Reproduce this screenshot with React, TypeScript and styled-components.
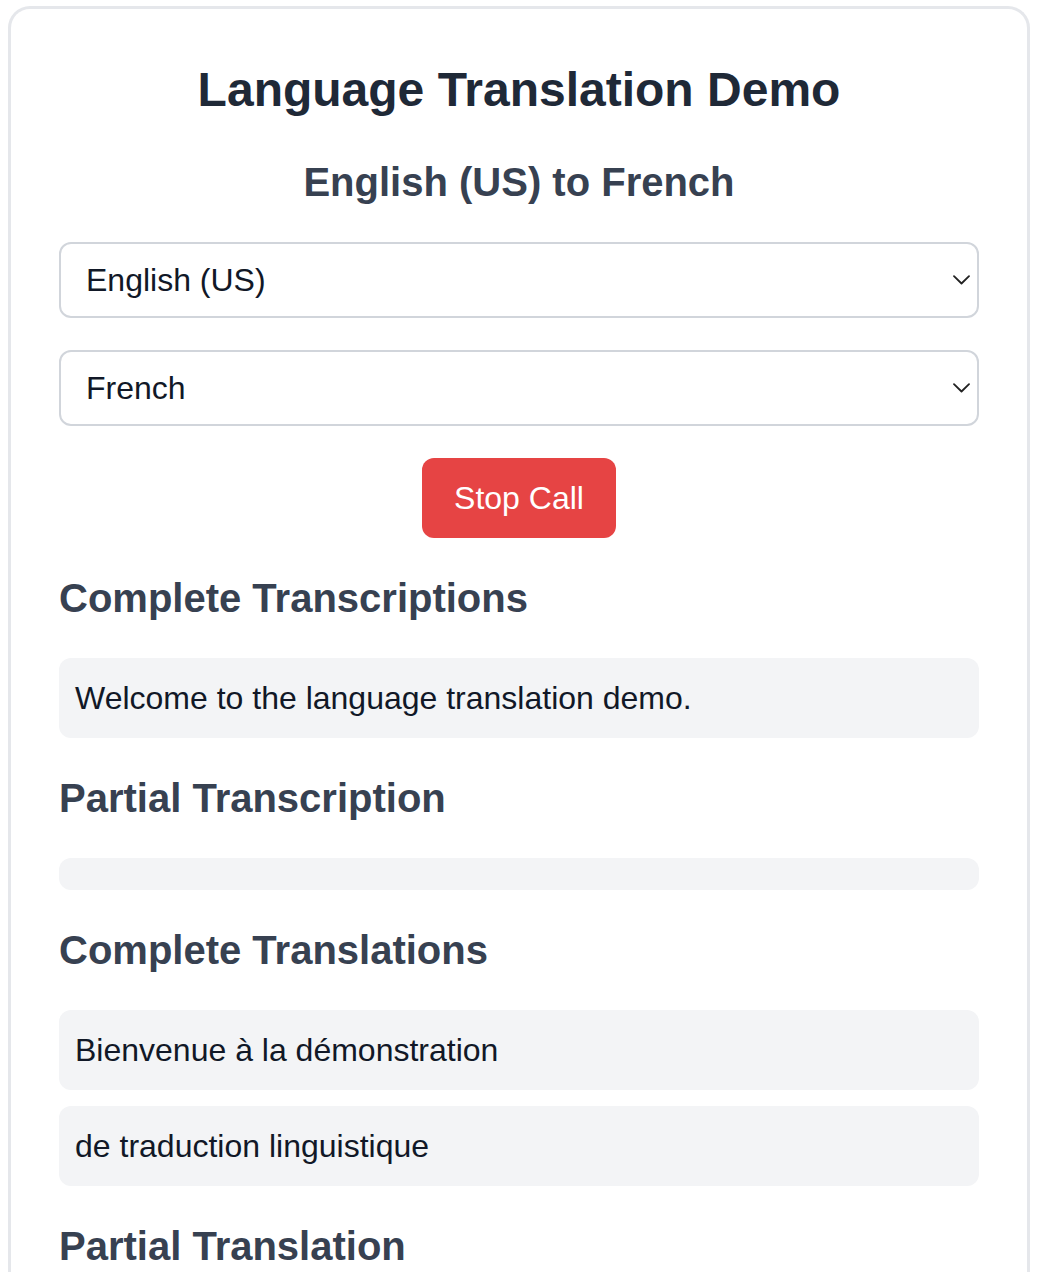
import React from "react";
import styled, { createGlobalStyle } from "styled-components";

const Global = createGlobalStyle`
  html, body { margin: 0; padding: 0; background: #ffffff; }
  body { font-family: "Liberation Sans", Arial, Helvetica, sans-serif; }
  * { box-sizing: border-box; }
`;

const Page = styled.div`
  padding: 6px 8px 0 8px;
`;

const Card = styled.div`
  border: 3px solid #e5e7eb;
  border-bottom: none;
  border-radius: 22px 22px 0 0;
  padding: 48px 48px 0 48px;
  background: #fff;
  display: flex;
  flex-direction: column;
`;

const Title = styled.h1`
  margin: 1px 0 0 0;
  font-size: 48px;
  line-height: 64px;
  font-weight: 700;
  color: #1f2937;
  text-align: center;
`;

const Subtitle = styled.h2`
  margin: 32px 0 0 0;
  font-size: 40px;
  line-height: 56px;
  font-weight: 700;
  color: #374151;
  text-align: center;
`;

const SelectWrap = styled.div`
  position: relative;
  margin-top: 32px;
`;

const Select = styled.select`
  appearance: none;
  -webkit-appearance: none;
  display: block;
  width: 100%;
  height: 76px;
  border: 2px solid #d1d5db;
  border-radius: 12px;
  background: #fff;
  padding: 0 60px 0 25px;
  font-family: "Liberation Sans", Arial, sans-serif;
  font-size: 32px;
  color: #111827;
  outline: none;
`;

const Chevron = styled.svg`
  position: absolute;
  right: 9px;
  top: 50%;
  width: 17px;
  height: 10px;
  margin-top: -5px;
  pointer-events: none;
`;

const ButtonRow = styled.div`
  display: flex;
  justify-content: center;
  margin-top: 32px;
`;

const StopButton = styled.button`
  height: 80px;
  padding: 0 32px;
  border: none;
  border-radius: 12px;
  background: #e64444;
  color: #fff;
  font-family: "Liberation Sans", Arial, sans-serif;
  font-size: 32px;
  line-height: 48px;
  cursor: pointer;
`;

const SectionHeading = styled.h3`
  margin: 32px 0;
  font-size: 40px;
  line-height: 56px;
  font-weight: 700;
  color: #374151;
`;

const EntryList = styled.div`
  display: flex;
  flex-direction: column;
  gap: 16px;
`;

const Entry = styled.div`
  background: #f3f4f6;
  border-radius: 12px;
  padding: 16px;
  min-height: 32px;
  font-size: 32px;
  line-height: 48px;
  color: #111827;
`;

const LangSelect = ({ value, options }: { value: string; options: string[] }) => (
  <SelectWrap>
    <Select defaultValue={value}>
      {options.map((o) => (
        <option key={o}>{o}</option>
      ))}
    </Select>
    <Chevron viewBox="0 0 17 10" fill="none">
      <path d="M1 1.2 L8.5 8.5 L16 1.2" stroke="#222" strokeWidth="1.8" strokeLinecap="round" strokeLinejoin="round" />
    </Chevron>
  </SelectWrap>
);

export default function App() {
  const langs = ["English (US)", "French", "Spanish", "German"];
  return (
    <Page>
      <Global />
      <Card>
        <Title>Language Translation Demo</Title>
        <Subtitle>English (US) to French</Subtitle>
        <LangSelect value="English (US)" options={langs} />
        <LangSelect value="French" options={langs} />
        <ButtonRow>
          <StopButton>Stop Call</StopButton>
        </ButtonRow>
        <SectionHeading>Complete Transcriptions</SectionHeading>
        <EntryList>
          <Entry>Welcome to the language translation demo.</Entry>
        </EntryList>
        <SectionHeading>Partial Transcription</SectionHeading>
        <Entry />
        <SectionHeading>Complete Translations</SectionHeading>
        <EntryList>
          <Entry>Bienvenue à la démonstration</Entry>
          <Entry>de traduction linguistique</Entry>
        </EntryList>
        <SectionHeading>Partial Translation</SectionHeading>
        <Entry />
      </Card>
    </Page>
  );
}
